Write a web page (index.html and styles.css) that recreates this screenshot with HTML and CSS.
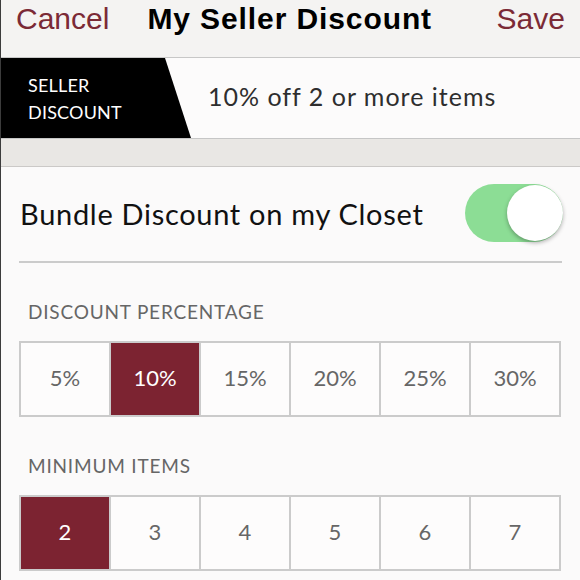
FILE: index.html
```html
<!DOCTYPE html>
<html lang="en">
<head>
    <meta charset="UTF-8">
    <meta name="viewport" content="width=device-width, initial-scale=1.0">
    <title>My Seller Discount</title>
    <link rel="stylesheet" href="styles.css">
</head>
<body>
    <div class="screen">
        <div class="nav">
            <span class="nav-btn">Cancel</span>
            <span class="nav-title">My Seller Discount</span>
            <span class="nav-btn save">Save</span>
        </div>

        <div class="banner">
            <div class="tag">SELLER<br>DISCOUNT</div>
            <div class="summary">10% off 2 or more items</div>
        </div>
        <div class="stripe"></div>

        <div class="content">
            <div class="switch-row">
                <span class="switch-label">Bundle Discount on my Closet</span>
                <div class="toggle on"><div class="knob"></div></div>
            </div>

            <div class="section-title">DISCOUNT PERCENTAGE</div>
            <ul class="choices">
                <li>5%</li>
                <li class="active">10%</li>
                <li>15%</li>
                <li>20%</li>
                <li>25%</li>
                <li>30%</li>
            </ul>

            <div class="section-title">MINIMUM ITEMS</div>
            <ul class="choices">
                <li class="active">2</li>
                <li>3</li>
                <li>4</li>
                <li>5</li>
                <li>6</li>
                <li>7</li>
            </ul>
        </div>
    </div>
</body>
</html>
```

FILE: styles.css
```css
* {
    padding: 0;
    margin: 0;
    box-sizing: border-box;
}

body {
    width: 580px;
    height: 580px;
    overflow: hidden;
    background-color: #fbfafa;
    font-family: Lato, "Open Sans", sans-serif;
}

.screen {
    height: 580px;
    border-left: 1px solid #3c3c3c;
}

/* top bar */
.nav {
    height: 58px;
    padding: 1px 15px 0 15px;
    display: flex;
    align-items: flex-start;
    background-color: #f4f3f2;
    border-bottom: 1px solid #c7c7c7;
    font-family: "Liberation Sans", Arial, sans-serif;
    font-size: 30px;
    line-height: 36px;
}

.nav-btn {
    color: #7b2a36;
}

.nav-title {
    color: #000;
    font-weight: bold;
    margin-left: 38px;
    letter-spacing: 0.9px;
}

.save {
    margin-left: auto;
}

/* seller discount banner */
.banner {
    height: 81px;
    display: flex;
    align-items: center;
    background-color: #fcfbfb;
    border-bottom: 1px solid #c6c6c6;
}

.tag {
    width: 190px;
    height: 100%;
    padding: 14px 0 0 27px;
    background-color: #000;
    color: #fff;
    font-size: 18px;
    line-height: 27px;
    letter-spacing: 0.2px;
    clip-path: polygon(0 0, 164px 0, 190px 100%, 0 100%);
}

.summary {
    margin: 0 0 4px 17px;
    font-size: 25px;
    letter-spacing: 1px;
    color: #2e2e2e;
}

.stripe {
    height: 28px;
    background-color: #e9e7e4;
    border-bottom: 1px solid #cbc9c7;
}

/* settings */
.content {
    padding: 0 18px 0 18px;
}

.switch-row {
    height: 96px;
    display: flex;
    justify-content: space-between;
    align-items: center;
    border-bottom: 2px solid #cbcbcb;
    padding: 0 0 2px 1px;
}

.switch-label {
    font-size: 29px;
    letter-spacing: 0.7px;
    color: #111;
}

.toggle {
    width: 98px;
    height: 58px;
    border-radius: 29px;
    background-color: #e4e4e4;
    position: relative;
    margin-right: -1px;
}

.toggle.on {
    background-color: #8cdd95;
}

.knob {
    width: 56px;
    height: 56px;
    border-radius: 50%;
    background-color: #fff;
    position: absolute;
    top: 1px;
    right: 0;
    box-shadow: 0 2px 4px rgba(0, 0, 0, 0.3);
}

.section-title {
    padding: 37px 0 0 9px;
    height: 78px;
    font-size: 19px;
    color: #666;
    letter-spacing: 0.8px;
}

.choices {
    list-style: none;
    display: grid;
    grid-template-columns: repeat(6, 1fr);
    border-top: 2px solid #cbcbcb;
    border-left: 2px solid #cbcbcb;
    margin-right: 1px;
}

.choices li {
    height: 74px;
    padding-bottom: 3px;
    display: flex;
    justify-content: center;
    align-items: center;
    border-right: 2px solid #cbcbcb;
    border-bottom: 2px solid #cbcbcb;
    background-color: #fdfcfc;
    font-size: 22px;
    color: #666;
}

.choices li.active {
    background-color: #7c2331;
    color: #fff;
}
```
